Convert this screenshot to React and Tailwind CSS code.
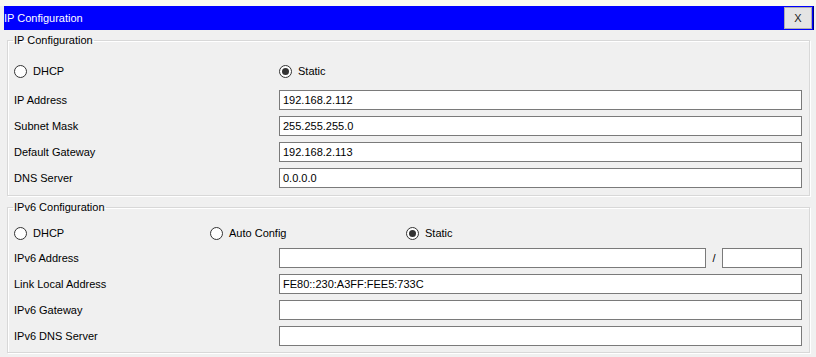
import React from "react";

const font = { fontFamily: '"Liberation Sans", Arial, sans-serif' };

function Radio({ checked, label, className = "" }) {
  return (
    <div className={"flex items-center h-[20px] " + className}>
      <span className="w-[13px] h-[13px] rounded-full border border-[#333] bg-white flex items-center justify-center shrink-0">
        {checked && <span className="w-[7px] h-[7px] rounded-full bg-[#333]" />}
      </span>
      <span className="ml-[6px] text-[11px] text-black leading-none">{label}</span>
    </div>
  );
}

function Field({ value = "" }) {
  return (
    <div className="flex-1 h-[20px] bg-white border border-[#7a7a7a] flex items-center pl-[3px] text-[11px] text-black leading-none">
      {value}
    </div>
  );
}

function Row({ label, children }) {
  return (
    <div className="flex items-center h-[20px]">
      <div className="w-[265px] shrink-0 text-[11px] text-black leading-none">{label}</div>
      <div className="flex-1 flex items-center">{children}</div>
    </div>
  );
}

function Group({ title, children, className = "" }) {
  return (
    <fieldset className={"mr-[6px] ml-[7px] border border-[#d8d8d8] shadow-[inset_1px_1px_0_#fff,1px_1px_0_#fff] pl-[6px] pr-[7px] " + className}>
      <legend className="text-[11px] leading-[13px] text-black px-[1px] -ml-[1px]">{title}</legend>
      {children}
    </fieldset>
  );
}

export default function App() {
  return (
    <div className="w-[816px] h-[357px] bg-[#f0f0f0] overflow-hidden" style={font}>
      <div className="h-[6px] bg-[#fafaf2]" />
      <div className="ml-[4px] mr-[2px] h-[24px] bg-[#0000ff] border-r border-[#000080] flex items-center justify-between">
        <span className="text-white text-[11px] leading-none">IP Configuration</span>
        <div className="w-[28px] h-[22px] mr-[1px] bg-[#e4e4e4] border border-[#adadad] flex items-center justify-center text-[11px] text-[#222] leading-none">
          X
        </div>
      </div>

      <Group title="IP Configuration" className="mt-[4px] pb-[7px]">
        <div className="flex mt-[14px]">
          <Radio label="DHCP" className="w-[265px]" />
          <Radio checked label="Static" />
        </div>
        <div className="flex flex-col gap-[6px] mt-[9px]">
          <Row label="IP Address"><Field value="192.168.2.112" /></Row>
          <Row label="Subnet Mask"><Field value="255.255.255.0" /></Row>
          <Row label="Default Gateway"><Field value="192.168.2.113" /></Row>
          <Row label="DNS Server"><Field value="0.0.0.0" /></Row>
        </div>
      </Group>

      <Group title="IPv6 Configuration" className="mt-[5px] pb-[6px]">
        <div className="flex mt-[9px]">
          <Radio label="DHCP" className="w-[196px]" />
          <Radio label="Auto Config" className="w-[196px]" />
          <Radio checked label="Static" />
        </div>
        <div className="flex flex-col gap-[6px] mt-[5px]">
          <Row label="IPv6 Address">
            <Field />
            <span className="w-[16px] text-center text-[11px] leading-none">/</span>
            <div className="w-[80px] h-[20px] bg-white border border-[#7a7a7a]" />
          </Row>
          <Row label="Link Local Address"><Field value="FE80::230:A3FF:FEE5:733C" /></Row>
          <Row label="IPv6 Gateway"><Field /></Row>
          <Row label="IPv6 DNS Server"><Field /></Row>
        </div>
      </Group>
    </div>
  );
}
